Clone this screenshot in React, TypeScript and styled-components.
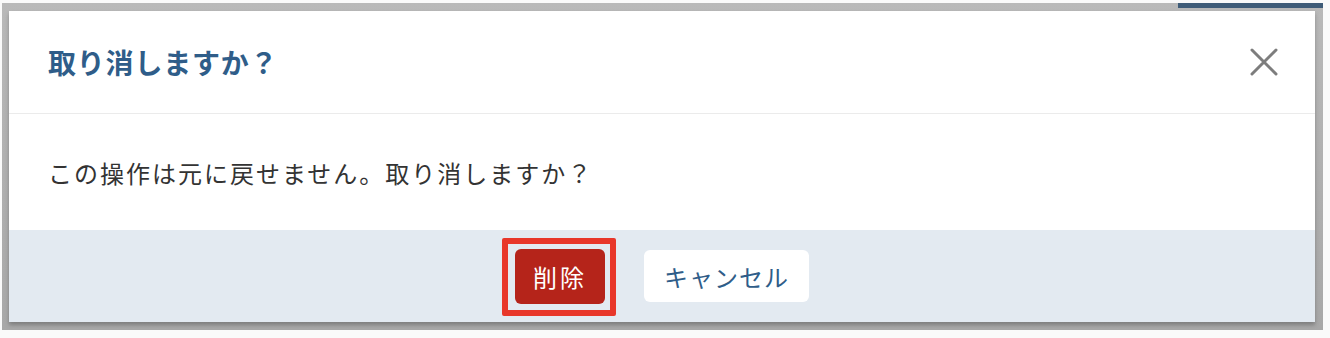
import React from 'react';
import styled, { createGlobalStyle } from 'styled-components';

const GlobalStyle = createGlobalStyle`
  html, body {
    margin: 0;
    padding: 0;
    background: #f4f4f4;
    font-family: 'Noto Sans CJK JP', 'Noto Sans', sans-serif;
  }
`;

const Page = styled.div`
  width: 1330px;
  height: 338px;
  box-sizing: border-box;
  padding: 3px 7px 8px 2px;
  background: #fafafa;
`;

const Backdrop = styled.div`
  position: relative;
  height: 100%;
  box-sizing: border-box;
  padding: 8px 8px 8px 7px;
  background: linear-gradient(#b9b9b9, #a8a8a8);
`;

const PageStrip = styled.div`
  position: absolute;
  top: 0;
  right: 0;
  width: 145px;
  height: 5px;
  background: #3f5c78;
`;

const Dialog = styled.div`
  position: relative;
  display: flex;
  flex-direction: column;
  height: 100%;
  background: #fff;
  box-shadow: 0 3px 4px rgba(0, 0, 0, 0.25);
`;

const Header = styled.div`
  display: flex;
  align-items: center;
  justify-content: space-between;
  height: 102px;
  padding: 0 37px 0 39px;
  border-bottom: 1px solid #ebebeb;
`;

const Title = styled.h2`
  margin: 0;
  font-size: 28px;
  font-weight: 700;
  letter-spacing: 0.8px;
  color: #2f5d89;
`;

const CloseButton = styled.button`
  display: flex;
  background: none;
  border: none;
  padding: 0;
  cursor: pointer;
`;

const Body = styled.div`
  display: flex;
  align-items: center;
  height: 116px;
  padding: 0 39px;
  font-size: 24px;
  letter-spacing: 2px;
  color: #333;
`;

const Footer = styled.div`
  flex: 1;
  display: flex;
  align-items: center;
  justify-content: center;
  gap: 39px;
  background: #e3eaf1;
`;

const Button = styled.button<{ $danger?: boolean }>`
  position: relative;
  height: ${p => (p.$danger ? '55px' : '52px')};
  padding: 0 ${p => (p.$danger ? '18px' : '20px')};
  border: none;
  border-radius: 6px;
  font-family: inherit;
  font-size: 24px;
  letter-spacing: ${p => (p.$danger ? '3px' : '1px')};
  background: ${p => (p.$danger ? '#b5241a' : '#fff')};
  color: ${p => (p.$danger ? '#fff' : '#2f5d89')};
  cursor: pointer;
`;

const Highlight = styled.span`
  position: absolute;
  top: -11px;
  bottom: -12px;
  left: -13px;
  right: -11px;
  border: 6px solid #e8372a;
  border-radius: 2px;
  pointer-events: none;
`;

export default function App() {
  return (
    <>
      <GlobalStyle />
      <Page>
        <Backdrop>
          <PageStrip />
          <Dialog>
            <Header>
              <Title>取り消しますか？</Title>
              <CloseButton aria-label="閉じる">
                <svg width="28" height="28" viewBox="0 0 28 28">
                  <path d="M2 2 L26 26 M26 2 L2 26" stroke="#7d7d7d" strokeWidth="3" strokeLinecap="round" />
                </svg>
              </CloseButton>
            </Header>
            <Body>この操作は元に戻せません。取り消しますか？</Body>
            <Footer>
              <Button $danger>
                削除
                <Highlight />
              </Button>
              <Button>キャンセル</Button>
            </Footer>
          </Dialog>
        </Backdrop>
      </Page>
    </>
  );
}
